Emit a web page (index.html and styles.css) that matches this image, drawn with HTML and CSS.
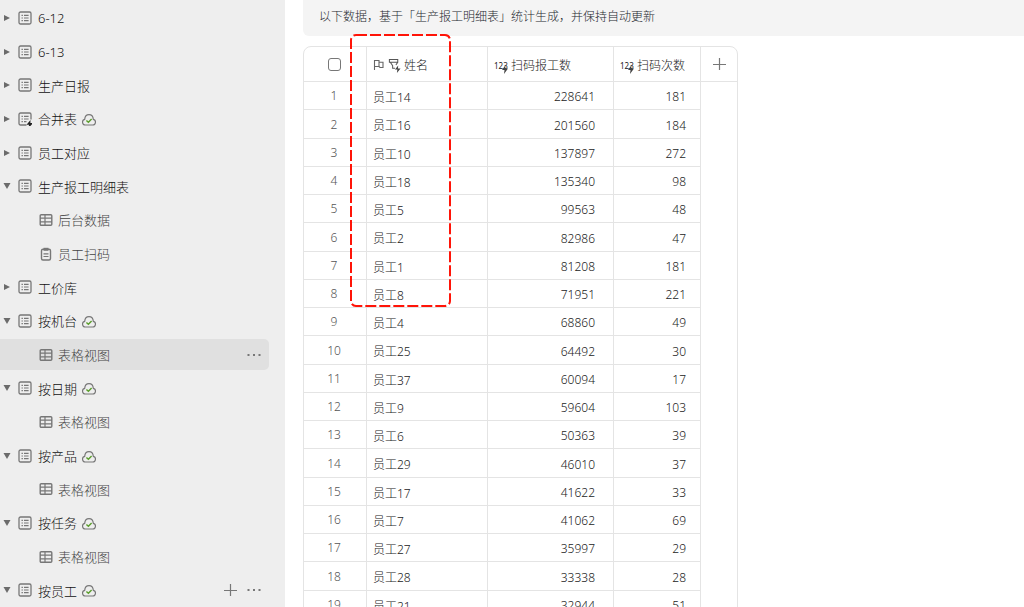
FILE: index.html
```html
<!DOCTYPE html>
<html lang="zh-CN">
<head>
    <meta charset="UTF-8">
    <meta name="viewport" content="width=device-width, initial-scale=1.0">
    <title>生产报工明细表</title>
    <link rel="stylesheet" href="styles.css">
</head>
<body>
    <svg class="sprite" aria-hidden="true">
        <symbol id="i-right" viewBox="0 0 8 8"><path d="M1 1v6l6-3z" fill="#6b6b6b"/></symbol>
        <symbol id="i-down" viewBox="0 0 8 8"><path d="M.5 1h7L4 7z" fill="#6b6b6b"/></symbol>
        <symbol id="i-form" viewBox="0 0 14 14">
            <rect x="1" y="1" width="12" height="12" rx="1.5" fill="none" stroke="#777" stroke-width="1.3"/>
            <path d="M3.5 4.3h1.4M3.5 7h1.4M3.5 9.7h1.4M6 4.3h4.6M6 7h4.6M6 9.7h4.6" stroke="#777" stroke-width="1.2"/>
        </symbol>
        <symbol id="i-form-sync" viewBox="0 0 14 14">
            <path d="M8.5 13h-6A1.5 1.5 0 0 1 1 11.5v-9A1.5 1.5 0 0 1 2.5 1h9A1.5 1.5 0 0 1 13 2.5v5" fill="none" stroke="#777" stroke-width="1.3"/>
            <path d="M3.5 4.3h1.4M3.5 7h1.4M3.5 9.7h1.4M6 4.3h4.6M6 7h4.6M6 9.7h2.5" stroke="#777" stroke-width="1.2"/>
            <path d="M12.5 8l-4 4.700h2.500l-.4 3.300 4.400-5h-2.600z" fill="#222"/>
        </symbol>
        <symbol id="i-grid" viewBox="0 0 14 14">
            <rect x="1.2" y="1.7" width="11.6" height="10.6" rx="1" fill="none" stroke="#777" stroke-width="1.4"/>
            <path d="M1 5.2h12M1 8.8h12M6 2v10" stroke="#777" stroke-width="1.2"/>
        </symbol>
        <symbol id="i-clip" viewBox="0 0 14 14">
            <rect x="2.5" y="2.2" width="9" height="10.8" rx="1.5" fill="none" stroke="#777" stroke-width="1.4"/>
            <path d="M4.5.8h5v3h-5z" fill="#777"/>
            <path d="M4.5 6.8h5M4.5 9.5h5" stroke="#777" stroke-width="1.2"/>
        </symbol>
        <symbol id="i-cloud" viewBox="0 0 14 14">
            <path d="M3.6 13A2.9 2.9 0 0 1 2.700 7.300C2.900 4.600 4.600 2.600 7 2.600s4.100 2 4.300 4.700a2.900 2.900 0 0 1-.9 5.700z" fill="none" stroke="#777" stroke-width="1.2"/>
            <path d="M4.4 8.4l2 1.900 3.200-3.300" fill="none" stroke="#5b9e2d" stroke-width="1.4"/>
        </symbol>
        <symbol id="i-dots" viewBox="0 0 14 14"><path d="M.5 6h2v2h-2zM6 6h2v2H6zM11.5 6h2v2h-2z" fill="#777"/></symbol>
        <symbol id="i-plus" viewBox="0 0 14 14"><path d="M7.5 1v12M1 7.5h13" stroke="#777" stroke-width="1.2"/></symbol>
        <symbol id="i-flag" viewBox="0 0 12 12"><path d="M1.5 11V1.500H6v6H1.500M6 3.300h4v5.200H7L6 7.500" fill="none" stroke="#666" stroke-width="1.1"/></symbol>
        <symbol id="i-lookup" viewBox="0 0 14 16">
            <path d="M1.5 1.500h9v3h-9zM2.500 4.500L5 8.200V11h2.500M10.500 4.500L8.500 7.500" fill="none" stroke="#555" stroke-width="1.1"/>
            <path d="M11 8L7.500 12.300h2.600L9.600 16l3.900-4.700h-2.800z" fill="#444"/>
        </symbol>
        <symbol id="i-bolt" viewBox="0 0 6 9"><path d="M3.5 0L0 5h2.500L2 9l4-5.500H3.300z" fill="#444"/></symbol>
    </svg>

    <aside class="sidebar">
        <ul class="tree" id="tree"></ul>
    </aside>

    <main class="content">
        <p class="notice">以下数据，基于「生产报工明细表」统计生成，并保持自动更新</p>
        <div class="sheet">
            <table class="grid">
                <thead>
                    <tr>
                        <th class="col-index"><input type="checkbox" aria-label="全选"></th>
                        <th class="col-name">
                            <div class="field">
                                <svg class="icon-flag"><use href="#i-flag"/></svg>
                                <svg class="icon-lookup"><use href="#i-lookup"/></svg>
                                <span>姓名</span>
                            </div>
                        </th>
                        <th class="col-total">
                            <div class="field"><span class="num-icon">123<svg><use href="#i-bolt"/></svg></span><span>扫码报工数</span></div>
                        </th>
                        <th class="col-count">
                            <div class="field"><span class="num-icon">123<svg><use href="#i-bolt"/></svg></span><span>扫码次数</span></div>
                        </th>
                        <th class="col-add"><button class="icon-btn" aria-label="添加字段"><svg class="icon"><use href="#i-plus"/></svg></button></th>
                    </tr>
                </thead>
                <tbody id="rows"></tbody>
            </table>
            <svg class="highlight"><rect x="2" y="2" rx="5"/></svg>
        </div>
    </main>

    <script>
        const tree = [
            { name: "6-12" },
            { name: "6-13" },
            { name: "生产日报" },
            { name: "合并表", icon: "form-sync", cloud: true },
            { name: "员工对应" },
            { name: "生产报工明细表", open: true },
            { name: "后台数据", icon: "grid", view: true },
            { name: "员工扫码", icon: "clip", view: true },
            { name: "工价库" },
            { name: "按机台", open: true, cloud: true },
            { name: "表格视图", icon: "grid", view: true, active: true, more: true },
            { name: "按日期", open: true, cloud: true },
            { name: "表格视图", icon: "grid", view: true },
            { name: "按产品", open: true, cloud: true },
            { name: "表格视图", icon: "grid", view: true },
            { name: "按任务", open: true, cloud: true },
            { name: "表格视图", icon: "grid", view: true },
            { name: "按员工", open: true, cloud: true, add: true, more: true }
        ];

        const rows = [
            ["员工14", 228641, 181], ["员工16", 201560, 184], ["员工10", 137897, 272],
            ["员工18", 135340, 98], ["员工5", 99563, 48], ["员工2", 82986, 47],
            ["员工1", 81208, 181], ["员工8", 71951, 221], ["员工4", 68860, 49],
            ["员工25", 64492, 30], ["员工37", 60094, 17], ["员工9", 59604, 103],
            ["员工6", 50363, 39], ["员工29", 46010, 37], ["员工17", 41622, 33],
            ["员工7", 41062, 69], ["员工27", 35997, 29], ["员工28", 33338, 28],
            ["员工21", 32944, 51]
        ];

        function icon(name, cls = "icon") {
            return `<svg class="${cls}"><use href="#i-${name}"/></svg>`;
        }

        function button(name, label) {
            return `<button class="icon-btn" aria-label="${label}">${icon(name)}</button>`;
        }

        document.getElementById("tree").innerHTML = tree.map(item => `
            <li class="node${item.view ? " view" : ""}${item.active ? " active" : ""}">
                ${item.view ? "" : `<button class="icon-btn" aria-label="展开">${icon(item.open ? "down" : "right", "arrow")}</button>`}
                <a href="#">${icon(item.icon || "form")}<span>${item.name}</span>${item.cloud ? icon("cloud", "icon cloud") : ""}</a>
                <div class="actions">${item.add ? button("plus", "新建") : ""}${item.more ? button("dots", "更多") : ""}</div>
            </li>`).join("");

        document.getElementById("rows").innerHTML = rows.map((row, i) => `
            <tr>
                <td class="col-index">${i + 1}</td>
                <td>${row[0]}</td>
                <td class="col-total num">${row[1]}</td>
                <td class="num">${row[2]}</td>
                <td class="col-add"></td>
            </tr>`).join("");
    </script>
</body>
</html>
```
FILE: styles.css
```css
* {
    box-sizing: border-box;
}

body {
    margin: 0;
    height: 100vh;
    display: flex;
    overflow: hidden;
    background: #fff;
    color: #222;
    font-family: "Noto Sans", "Noto Sans CJK SC", sans-serif;
    font-size: 12px;
    font-weight: 300;
}

svg {
    display: block;
    flex: none;
    overflow: visible;
}

.sprite {
    position: absolute;
    width: 0;
    height: 0;
}

.icon {
    width: 14px;
    height: 14px;
}

.icon-btn {
    display: flex;
    padding: 0;
    border: 0;
    background: none;
    cursor: pointer;
}

/* sidebar */
.sidebar {
    flex: none;
    width: 285px;
    padding: 1px 16px 0 0;
    background: #eee;
}

.tree {
    display: flex;
    flex-direction: column;
    height: 100%;
    margin: 0;
    padding: 0;
    list-style: none;
}

.node {
    flex: 1;
    display: flex;
    align-items: center;
    gap: 7px;
    margin: 1px 0;
    padding: 0 8px 0 3px;
    border-radius: 0 5px 5px 0;
}

.node a {
    display: flex;
    align-items: center;
    gap: 6px;
    color: #111;
    font-size: 13px;
    text-decoration: none;
}

.node.view {
    padding-left: 39px;
}

.node.view a {
    gap: 5px;
    color: #444;
}

.node.active {
    background: #e0e0e0;
}

.arrow {
    width: 8px;
    height: 8px;
}

.node .cloud {
    margin-left: -1px;
}

.actions {
    display: flex;
    gap: 10px;
    margin-left: auto;
}

/* content */
.content {
    flex: 1;
    min-width: 0;
    padding-left: 18px;
}

.notice {
    height: 36px;
    margin: 0 0 10px;
    padding: 0 16px;
    border-radius: 0 0 0 6px;
    background: #f4f4f4;
    color: #25282f;
    line-height: 34px;
}

.sheet {
    position: relative;
    width: 435px;
    border: 1px solid #e4e4e4;
    border-radius: 8px 8px 0 0;
}

.grid {
    width: 100%;
    table-layout: fixed;
    border-collapse: separate;
    border-spacing: 0;
}

.grid th,
.grid td {
    height: 28px;
    padding: 2px 6px 0;
    border-right: 1px solid #e4e4e4;
    border-bottom: 1px solid #e4e4e4;
    font-weight: inherit;
    text-align: left;
}

.grid tr:nth-child(4n + 2) td {
    height: 29px;
}

.grid th {
    height: 35px;
}

.grid .col-index {
    width: 63px;
    padding: 0 2px 0 0;
    color: #555;
    text-align: center;
}

.grid input {
    appearance: none;
    display: block;
    width: 13px;
    height: 13px;
    margin: 0 auto;
    border: 1px solid #777;
    border-radius: 3px;
}

.grid .col-name {
    width: 121px;
}

.grid .col-total {
    width: 126px;
}

.grid .col-count {
    width: 87px;
}

.grid .col-add {
    padding: 0 11px;
    border-right: 0;
}

.grid td.col-add {
    border-bottom: 0;
}

.grid .num {
    padding-right: 14px;
    text-align: right;
}

.grid .num.col-total {
    padding-right: 18px;
}

.field {
    display: flex;
    align-items: center;
    gap: 3px;
    white-space: nowrap;
}

.icon-flag {
    width: 12px;
    height: 12px;
}

.icon-lookup {
    width: 13px;
    height: 15px;
}

.num-icon {
    position: relative;
    width: 14px;
    font-size: 8px;
    font-weight: normal;
}

.num-icon svg {
    position: absolute;
    right: 0;
    bottom: -3px;
    width: 6px;
    height: 9px;
}

/* dashed frame laid over the name column */
.highlight {
    position: absolute;
    top: -14px;
    left: 45px;
    width: 103px;
    height: 275px;
    pointer-events: none;
}

.highlight rect {
    width: 99px;
    height: 271px;
    fill: none;
    stroke: #ff1408;
    stroke-width: 2px;
    stroke-dasharray: 11 3;
}
```
